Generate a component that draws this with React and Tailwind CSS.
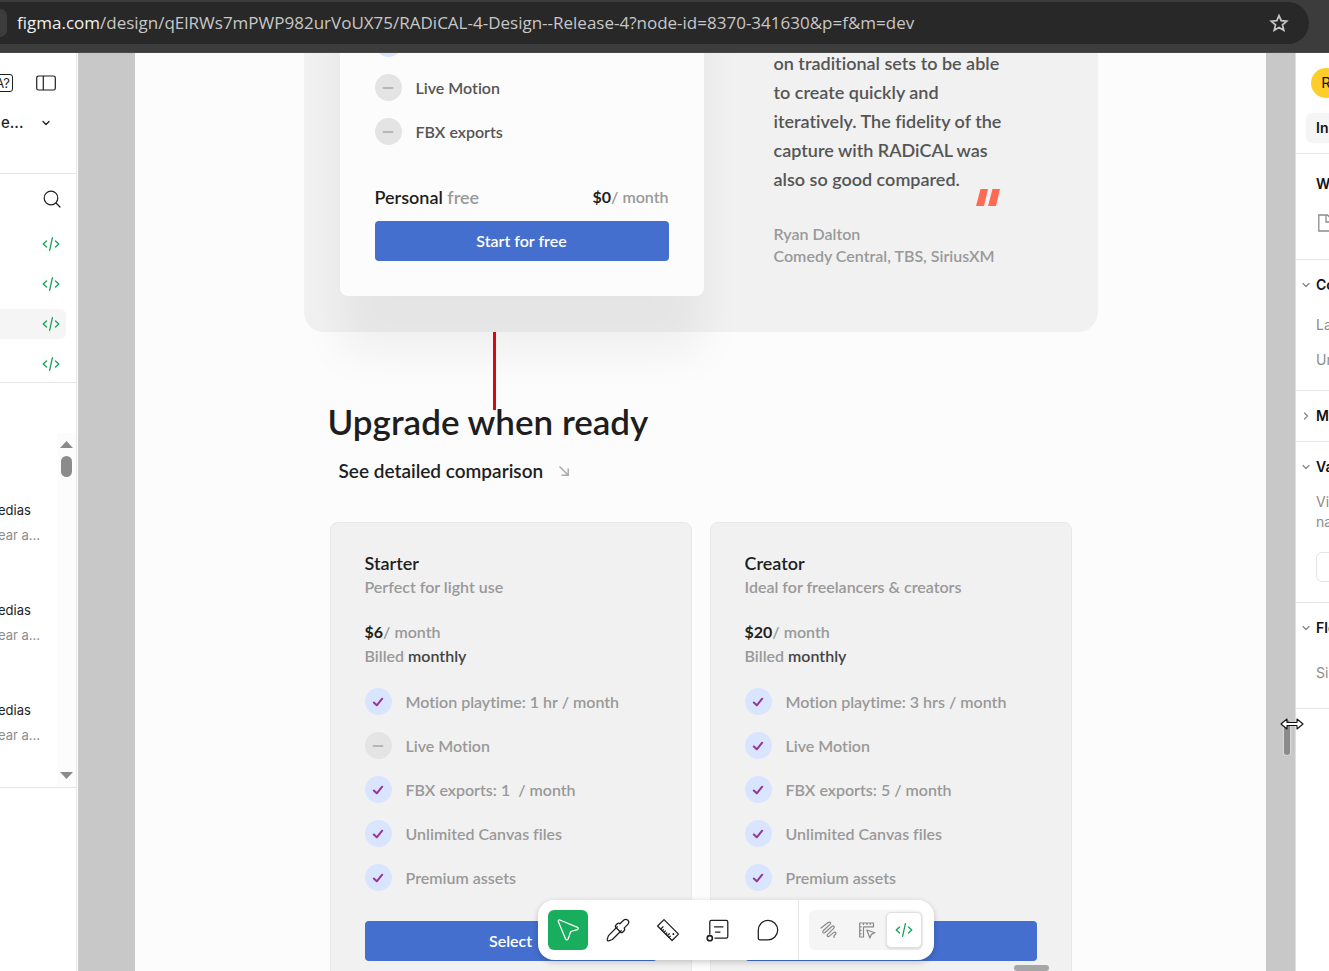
import { ChevronDown, ChevronRight, Minus } from "lucide-react"

// =========================
// DATA
// =========================
const starter = {
  name: "Starter",
  tagline: "Perfect for light use",
  price: "$6",
  features: [
    { text: "Motion playtime: 1 hr / month", on: true },
    { text: "Live Motion", on: false },
    { text: "FBX exports: 1  / month", on: true },
    { text: "Unlimited Canvas files", on: true },
    { text: "Premium assets", on: true }
  ]
}

const creator = {
  name: "Creator",
  tagline: "Ideal for freelancers & creators",
  price: "$20",
  features: [
    { text: "Motion playtime: 3 hrs / month", on: true },
    { text: "Live Motion", on: true },
    { text: "FBX exports: 5 / month", on: true },
    { text: "Unlimited Canvas files", on: true },
    { text: "Premium assets", on: true }
  ]
}

const layers = [false, false, true, false]
const results = [1, 2, 3]

// =========================
// ICONS
// =========================
function CodeIcon({ className }) {
  return (
    <svg viewBox="0 0 18 16" className={className} fill="none" stroke="currentColor" strokeWidth="1.3" strokeLinecap="round" strokeLinejoin="round">
      <path d="M4.500 5 1.200 8l3.300 3M13.500 5 16.800 8l-3.300 3M10.400 1.700 7.600 14.300" />
    </svg>
  )
}

function ToolIcon({ children }) {
  return (
    <svg viewBox="0 0 24 24" className="size-6" fill="none" stroke="currentColor" strokeWidth="1.25" strokeLinecap="round" strokeLinejoin="round">
      {children}
    </svg>
  )
}

function CursorIcon() {
  return (
    <ToolIcon>
      <path d="M2.300 3.600c-.4-1 .5-2 1.500-1.600l17.700 7.300c1.100.5 1 2-.1 2.400l-6.600 1.800-2.800 7.600c-.4 1.100-1.900 1.100-2.400 0z" />
    </ToolIcon>
  )
}

function DropperIcon() {
  return (
    <ToolIcon>
      <path d="M11.300 8.800 2.500 17.600 1.200 21.400c-.2.800.6 1.600 1.400 1.400l3.800-1.300 8.800-8.800" />
      <path d="M9.800 7.300l1.500-1.500c.8-.8 1.900-.7 2.600 0l3.700-3.600c1.200-1.200 3-1.200 4.200 0s1.200 3 0 4.200l-3.700 3.700c.8.800.8 1.800 0 2.600l-1.500 1.500c-.6.600-1.600.4-2.200-.2l-4.500-4.500c-.7-.7-.7-1.600-.1-2.200z" />
    </ToolIcon>
  )
}

function RulerIcon() {
  return (
    <ToolIcon>
      <path d="M8 1.600 22.500 16.100 16.100 22.500 1.600 8z" />
      <path d="M4.700 11.100 7 8.800M8 14.400l1.500-1.500M11.300 17.700l2-2M6.300 12.800l1.200-1.200M9.700 16.100l1.100-1.100M13 19.400l1.200-1.200" />
      <path d="M17.400 15.800v.4" strokeWidth="1.800" />
    </ToolIcon>
  )
}

function AnnotateIcon() {
  return (
    <ToolIcon>
      <path d="M3.800 16V4c0-.9.700-1.600 1.600-1.600h14.800c.9 0 1.600.7 1.600 1.600v14.400c0 .9-.7 1.600-1.600 1.600H9" />
      <circle cx="3.800" cy="20.200" r="2.600" strokeWidth="1.600" />
      <path d="M8.500 8.800h8.500M9.500 14h4.500" />
    </ToolIcon>
  )
}

function CommentIcon() {
  return (
    <ToolIcon>
      <path d="M12 2.400a9.700 9.700 0 1 1 0 19.400H3.500c-.7 0-1.200-.5-1.200-1.200v-8.500A9.700 9.700 0 0 1 12 2.400z" />
    </ToolIcon>
  )
}

function ScribbleIcon() {
  return (
    <svg viewBox="0 0 18 18" className="size-[18px]" fill="none" stroke="currentColor" strokeWidth="1.200" strokeLinecap="round" strokeLinejoin="round">
      <path d="M1 7 8.200 1.500c1.800-1.200 3.200.4 1.800 1.900L3.300 9.800c-1.400 1.500.3 2.900 1.800 1.700l6.700-6c1.600-1.300 3.300.3 1.900 1.900l-6 6c-1.300 1.500.2 2.900 1.700 1.700l4.200-3.500c1.500-1.200 3 .2 2 1.600l-1.400 1.500c-.6.7-.4 1.300.1 1.700" />
    </svg>
  )
}

function LayoutIcon() {
  return (
    <svg viewBox="0 0 18 18" className="size-[18px]" fill="none" stroke="currentColor" strokeWidth="1.200" strokeLinecap="round" strokeLinejoin="round">
      <path d="M15.500 5.500V2H1.700v14h3.800V5.800h10M5.500 2v1.500M1.700 5.800h1.500M1.700 9.300h1.500M1.700 12.800h1.500M9 2v1.500M12.300 2v1.500" />
      <path d="M8.800 9l8 2.800-3.400 1.600-1.500 3.600z" />
    </svg>
  )
}

// =========================
// PLAN PARTS
// =========================
function Feature({ on, children }) {
  return (
    <li className="flex items-center gap-3.5">
      <span
        className={
          on
            ? "flex size-[27px] shrink-0 items-center justify-center rounded-full bg-[#d9e4ff] text-[#96359b]"
            : "flex size-[27px] shrink-0 items-center justify-center rounded-full bg-[#e4e4e4] text-[#a6a6a6]"
        }
      >
        {on ? (
          <svg viewBox="0 0 12 12" className="size-3" fill="none" stroke="currentColor" strokeWidth="2" strokeLinecap="round" strokeLinejoin="round">
            <path d="M1.800 6.500 4.800 9.300 10.200 2.700" />
          </svg>
        ) : (
          <Minus size={16} strokeWidth={2} />
        )}
      </span>
      <span className="whitespace-pre">{children}</span>
    </li>
  )
}

function PlanCard({ plan }) {
  return (
    <article className="rounded-lg border border-[#e8e8e8] bg-[#f1f1f1] px-[34px] pt-7 pb-[34px] text-[16px] leading-6 font-semibold text-[#999]">
      <h3 className="text-[18px] font-semibold text-[#1e1e1e]">{plan.name}</h3>
      <p>{plan.tagline}</p>

      <p className="mt-[21px]">
        <span className="font-bold text-[#1e1e1e]">{plan.price}</span>/ month
      </p>
      <p>
        Billed <span className="text-[#444]">monthly</span>
      </p>

      <ul className="mt-5 space-y-[17px]">
        {plan.features.map((f) => (
          <Feature key={f.text} on={f.on}>{f.text}</Feature>
        ))}
      </ul>

      <button className="mt-[30px] h-10 w-full rounded bg-[#446fce] font-semibold text-white">
        Select
      </button>
    </article>
  )
}

// =========================
// BROWSER BAR
// =========================
function AddressBar() {
  return (
    <header className="relative z-20 h-[53px] shrink-0 border-b border-[#484848] bg-[#3c3c3c] pt-0.5 pr-5">
      <div className="flex h-[42px] items-center justify-between rounded-r-full bg-[#282828] pr-5">
        <div className="flex items-center gap-2.5">
          <span className="h-7 w-[7px] rounded-r-full bg-[#3c3c3c]" />
          <p className="font-['Open_Sans','Noto_Sans',sans-serif] text-[17px] whitespace-nowrap text-[#c7c7c7]">
            <span className="text-[#f0f0f0]">figma.com</span>
            /design/qElRWs7mPWP982urVoUX75/RADiCAL-4-Design--Release-4?node-id=8370-341630&p=f&m=dev
          </p>
        </div>
        <button aria-label="Bookmark" className="text-[#c7c7c7]">
          <svg viewBox="0 0 20 20" className="size-5" fill="none" stroke="currentColor" strokeWidth="1.700">
            <path d="M10 2.600 12.200 7.700 17.700 8.200 13.500 11.900 14.800 17.300 10 14.400 5.200 17.300 6.500 11.900 2.300 8.200 7.800 7.700z" />
          </svg>
        </button>
      </div>
    </header>
  )
}

// =========================
// LEFT PANEL
// =========================
function LeftPanel() {
  return (
    <aside className="w-[78px] shrink-0 border-r border-white bg-white text-[#1e1e1e]">
      <div className="h-full overflow-hidden border-r border-[#e6e6e6]">

        <div className="h-[121px] border-b border-[#e6e6e6] pt-[18px]">
          <div className="flex h-6 items-center gap-[23px]">
            <button aria-label="Missing fonts" className="-ml-2.5 flex h-[18px] w-[23px] shrink-0 items-center justify-end rounded-[3px] border border-[#1e1e1e] pr-0.5 text-[13px] leading-none">
              A?
            </button>
            <button aria-label="Toggle sidebar">
              <svg viewBox="0 0 20 16" className="h-4 w-5" fill="none" stroke="currentColor" strokeWidth="1.200">
                <rect x="0.700" y="1" width="18.600" height="14" rx="1.800" />
                <path d="M7.300 1v14" />
              </svg>
            </button>
          </div>
          <div className="mt-4 flex h-6 items-center justify-between pr-6 pl-px">
            <span className="text-[15px] font-medium">e...</span>
            <ChevronDown size={12} strokeWidth={2.5} />
          </div>
        </div>

        <div className="h-[209px] border-b border-[#e6e6e6] pt-2.5">
          <div className="flex h-[30px] items-center justify-end pr-[15px]">
            <button aria-label="Search">
              <svg viewBox="0 0 18 18" className="size-[18px]" fill="none" stroke="currentColor" strokeWidth="1.200" strokeLinecap="round">
                <circle cx="8" cy="8" r="6.800" />
                <path d="m13 13 4 4" />
              </svg>
            </button>
          </div>
          <div className="mt-[15px] space-y-2.5">
            {layers.map((active, i) => (
              <div
                key={i}
                className={
                  active
                    ? "mr-2.5 flex h-[30px] items-center justify-end rounded-r-md bg-[#f5f5f5] pr-1.5"
                    : "mr-2.5 flex h-[30px] items-center justify-end pr-1.5"
                }
              >
                <CodeIcon className="h-4 w-[18px] text-[#14a35a]" />
              </div>
            ))}
          </div>
        </div>

        <div className="flex h-[405px] border-b border-[#e6e6e6] pt-[50px]">
          <div className="flex-1 space-y-[50px] pt-[65px] text-[13px] leading-[25px] whitespace-nowrap">
            {results.map((r) => (
              <div key={r} className="-ml-0.5">
                <p>edias</p>
                <p className="text-[#8c8c8c]">ear a...</p>
              </div>
            ))}
          </div>
          <div className="flex w-[19px] shrink-0 flex-col items-center justify-between bg-[#fcfcfc] py-2 text-[#8b8b8b]">
            <div className="flex flex-col items-center gap-2">
              <svg viewBox="0 0 13 7" className="h-[7px] w-[13px]" fill="currentColor"><path d="M6.500 0 13 7H0z" /></svg>
              <span className="h-[21px] w-[11px] rounded-full bg-[#8b8b8b]" />
            </div>
            <svg viewBox="0 0 13 7" className="h-[7px] w-[13px]" fill="currentColor"><path d="M6.500 7 0 0h13z" /></svg>
          </div>
        </div>

      </div>
    </aside>
  )
}

// =========================
// RIGHT PANEL
// =========================
function SectionTitle({ open, children }) {
  return (
    <h2 className="flex h-[50px] items-center gap-1 pl-1 font-semibold">
      {open
        ? <ChevronDown size={12} strokeWidth={2.5} className="shrink-0 text-[#888]" />
        : <ChevronRight size={12} strokeWidth={2.5} className="shrink-0 text-[#888]" />}
      {children}
    </h2>
  )
}

function RightPanel() {
  return (
    <aside className="relative w-[34px] shrink-0 overflow-hidden border-l border-[#e0e0e0] bg-white text-[14px] leading-5 whitespace-nowrap text-[#111]">

      <div className="h-[101px] border-b border-[#e6e6e6] pt-[15px]">
        <div className="ml-[15px] flex size-[30px] items-center justify-center rounded-full bg-[#ffcd29] text-[15px]">R</div>
        <button className="mt-[15px] ml-2.5 h-[30px] rounded-md bg-[#f5f5f5] px-2.5 font-semibold">Ins</button>
      </div>

      <div className="h-[106px] border-b border-[#e6e6e6] pt-5 pl-5">
        <h2 className="font-semibold">W</h2>
        <svg viewBox="0 0 16 18" className="mt-5 ml-0.5 h-[18px] w-4 text-[#8c8c8c]" fill="none" stroke="currentColor" strokeWidth="1.300">
          <path d="M.8 1h8.700l5.500 5.500V17H.8zM8 1v7h7" />
        </svg>
      </div>

      <div className="h-[131px] border-b border-[#e6e6e6] text-[#8c8c8c]">
        <div className="text-[#111]"><SectionTitle open>Co</SectionTitle></div>
        <p className="mt-[5px] pl-5">La</p>
        <p className="mt-[15px] pl-5">Un</p>
      </div>

      <div className="h-[51px] border-b border-[#e6e6e6]">
        <SectionTitle>M</SectionTitle>
      </div>

      <div className="h-[161px] border-b border-[#e6e6e6]">
        <SectionTitle open>Va</SectionTitle>
        <p className="pl-5 text-[#8c8c8c]">Vi<br />na</p>
        <button aria-label="Open variables" className="mt-5 ml-5 h-[30px] w-40 rounded-md border border-[#e6e6e6]" />
      </div>

      <div className="h-[106px] border-b border-[#e6e6e6]">
        <SectionTitle open>Flo</SectionTitle>
        <p className="mt-2.5 pl-5 text-[#8c8c8c]">Si</p>
      </div>

    </aside>
  )
}

// =========================
// TOOLBAR
// =========================
function Toolbar() {
  return (
    <div className="absolute bottom-[11px] left-[460px] flex h-[60px] items-center rounded-2xl bg-white shadow-[0_2px_6px_rgba(0,0,0,0.2)]">
      <div className="flex gap-2.5 px-2.5 text-[#1e1e1e]">
        <button aria-label="Move" className="flex size-10 items-center justify-center rounded-md bg-[#18ae5d] text-white"><CursorIcon /></button>
        <button aria-label="Pick color" className="flex size-10 items-center justify-center"><DropperIcon /></button>
        <button aria-label="Measure" className="flex size-10 items-center justify-center"><RulerIcon /></button>
        <button aria-label="Annotate" className="flex size-10 items-center justify-center"><AnnotateIcon /></button>
        <button aria-label="Comment" className="flex size-10 items-center justify-center"><CommentIcon /></button>
      </div>
      <div className="h-full border-l border-[#e6e6e6] py-2.5 pr-[11px] pl-2.5">
        <div className="flex h-10 items-center rounded-md bg-[#f5f5f5] px-px text-[#888]">
          <button aria-label="Draw" className="flex size-[38px] items-center justify-center"><ScribbleIcon /></button>
          <button aria-label="Design" className="flex size-[38px] items-center justify-center"><LayoutIcon /></button>
          <button aria-label="Dev Mode" className="flex size-9 items-center justify-center rounded-[5px] border border-[#e0e0e0] bg-white text-[#14a35a] shadow-sm">
            <CodeIcon className="h-4 w-[18px]" />
          </button>
        </div>
      </div>
    </div>
  )
}

// =========================
// CANVAS
// =========================
function Canvas() {
  return (
    <main className="relative min-w-0 flex-1 overflow-hidden bg-[#c8c8c8] pr-[29px] pl-[57px]">
      <div className="h-full bg-[#fcfcfc] font-['Lato',sans-serif] [font-variant-ligatures:none]">
        <div className="mx-auto max-w-[794px]">

          {/* FREE PLAN */}
          <section className="relative flex gap-[70px] rounded-b-[20px] bg-[#f1f1f1] pb-9 pl-9">
            <div className="-mt-40 w-[364px] rounded-lg bg-[#fcfcfc] px-[35px] pt-[137px] pb-[35px] text-[16px] font-semibold text-[#555] shadow-[0_58px_44px_rgba(0,0,0,0.05)]">
              <ul className="space-y-[17px]">
                <Feature on />
                <Feature>Live Motion</Feature>
                <Feature>FBX exports</Feature>
              </ul>
              <div className="mt-[38px] flex h-7 items-center justify-between text-[#999]">
                <h3 className="text-[18px]"><span className="text-[#1e1e1e]">Personal</span> free</h3>
                <p><span className="font-bold text-[#1e1e1e]">$0</span>/ month</p>
              </div>
              <button className="mt-2.5 h-10 w-full rounded bg-[#446fce] text-white">Start for free</button>
            </div>

            <figure>
              <blockquote className="relative -mt-1 text-[18px] leading-[29px] font-semibold text-[#555]">
                on traditional sets to be able<br />
                to create quickly and<br />
                iteratively. The fidelity of the<br />
                capture with RADiCAL was<br />
                also so good compared.
                <svg viewBox="0 0 24 17" className="absolute top-[140px] left-[202px] h-[17px] w-6" fill="#ff6a55">
                  <path d="M4.500 0H12L8 17H0zM16.500 0H24l-4 17h-8z" />
                </svg>
              </blockquote>
              <figcaption className="mt-[29px] text-[16px] leading-[22px] font-semibold text-[#999]">
                Ryan Dalton<br />
                Comedy Central, TBS, SiriusXM
              </figcaption>
            </figure>

            {/* CONNECTOR */}
            <span className="absolute top-full left-[189px] h-[78px] w-[3px] bg-[#d8090f]" />
          </section>

          {/* UPGRADE */}
          <section className="pt-[67px] text-[#1e1e1e]">
            <h1 className="pl-6 text-[35px] leading-[44px] font-semibold">Upgrade when ready</h1>
            <a href="#compare" className="mt-3.5 ml-[35px] flex h-7 w-fit items-center gap-4 text-[19px] font-semibold">
              See detailed comparison
              <svg viewBox="0 0 10 10" className="size-2.5 text-[#aaa]" fill="none" stroke="currentColor" strokeWidth="1.500">
                <path d="M.5.5 9 9M9.200 2.500v6.700H2.500" />
              </svg>
            </a>
            <div id="compare" className="mt-[37px] grid grid-cols-2 gap-[18px] px-[26px]">
              <PlanCard plan={starter} />
              <PlanCard plan={creator} />
            </div>
          </section>

        </div>
      </div>

      {/* SCROLL THUMBS */}
      <span className="absolute top-[667px] right-[5px] h-[35px] w-1.5 rounded-full bg-[#8b8b8b] ring-1 ring-[#d8d8d8]" />
      <span className="absolute right-[246px] bottom-0 h-1.5 w-[35px] rounded-full bg-[#a6a6a6]" />

      <Toolbar />
    </main>
  )
}

function App() {
  return (
    <div className="relative flex h-screen flex-col overflow-hidden bg-white font-['Inter',sans-serif]">
      <AddressBar />
      <div className="flex min-h-0 flex-1">
        <LeftPanel />
        <Canvas />
        <RightPanel />
      </div>

      {/* RESIZE POINTER */}
      <svg viewBox="0 0 24 12" className="absolute top-[718px] right-[25px] z-30 h-3 w-6" fill="#fff" stroke="#111" strokeWidth="1.100" strokeLinejoin="round">
        <path d="M1 6 7 1v3.500h10V1l6 5-6 5V7.500H7V11z" />
      </svg>
    </div>
  )
}

export default App
